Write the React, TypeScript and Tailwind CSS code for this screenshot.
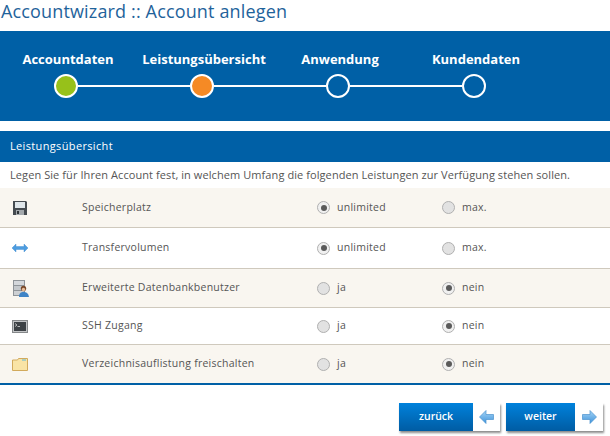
import * as React from "react";

const steps = [
  { label: "Accountdaten", fill: "bg-[#97c11a]" },
  { label: "Leistungsübersicht", fill: "bg-[#f58a25]" },
  { label: "Anwendung", fill: "" },
  { label: "Kundendaten", fill: "" },
];

function FloppyIcon() {
  return (
    <svg width="14" height="14" viewBox="0 0 14 14">
      <path d="M0 0h13l1 1v13H0z" fill="#454b50" />
      <rect x="2" y="1" width="10" height="6" fill="#dfe6ea" />
      <rect x="3" y="9" width="8" height="5" fill="#a4a9ad" />
      <rect x="4" y="10" width="2" height="3" fill="#2f3438" />
    </svg>
  );
}

function TransferIcon() {
  return (
    <svg width="16" height="8" viewBox="0 0 16 8">
      <path d="M0 4 4 0v2.500h8V0l4 4-4 4V5.500H4V8z" fill="#4d9de0" stroke="#3b87cc" strokeWidth="0.4" />
    </svg>
  );
}

function DbUserIcon() {
  return (
    <svg width="16" height="17" viewBox="0 0 16 17">
      <rect x="0" y="0" width="12" height="16" fill="#8f9499" />
      <rect x="1" y="1" width="10" height="4" fill="#d4d7db" />
      <rect x="1" y="6" width="10" height="4" fill="#c4c8cc" />
      <rect x="1" y="11" width="10" height="4" fill="#cdd0d3" />
      <circle cx="10.500" cy="8.500" r="2.700" fill="#7a4a2c" />
      <circle cx="10.500" cy="9.500" r="1.700" fill="#e8bd9a" />
      <path d="M6 17c0-4 2-5 4.500-5S15.500 13 16 17z" fill="#3f84c6" />
    </svg>
  );
}

function ConsoleIcon() {
  return (
    <svg width="16" height="13" viewBox="0 0 16 13">
      <rect x="0.500" y="0.500" width="15" height="12" fill="#c2c4c6" stroke="#85888a" />
      <rect x="2" y="2" width="12" height="9" fill="#3d4246" />
      <path d="M3 3.500 5 5 3 6.500" fill="none" stroke="#e8e8e8" strokeWidth="0.7" />
      <path d="M5.500 6.500H8" stroke="#e8e8e8" strokeWidth="0.7" />
    </svg>
  );
}

function FolderIcon() {
  return (
    <svg width="16" height="13" viewBox="0 0 16 13">
      <path d="M0.500 12.500V2h5l1-1.500h9v12z" fill="#f9e4a6" stroke="#d2aa5c" />
      <path d="M10 1.500h4v1h-4z" fill="#5bb8d8" />
    </svg>
  );
}

function Radio({ on }: { on: boolean }) {
  return (
    <span
      className={`flex size-[13px] shrink-0 items-center justify-center rounded-full border-[1.500px] border-[#b0b0b0] ${on ? "bg-[#f0f0f0]" : "bg-[#e2e2e2]"}`}
    >
      {on && <span className="size-[6px] rounded-full bg-[#5a5a5a]" />}
    </span>
  );
}

const rows = [
  { icon: <FloppyIcon />, name: "Speicherplatz", a: "unlimited", b: "max.", first: true, tint: true, h: "h-[40px]", pad: "pl-[13px]" },
  { icon: <TransferIcon />, name: "Transfervolumen", a: "unlimited", b: "max.", first: true, tint: false, h: "h-[41px]", pad: "pl-[12px]" },
  { icon: <DbUserIcon />, name: "Erweiterte Datenbankbenutzer", a: "ja", b: "nein", first: false, tint: true, h: "h-[39px]", pad: "pl-[13px]" },
  { icon: <ConsoleIcon />, name: "SSH Zugang", a: "ja", b: "nein", first: false, tint: false, h: "h-[37px]", pad: "pl-[12px]" },
  { icon: <FolderIcon />, name: "Verzeichnisauflistung freischalten", a: "ja", b: "nein", first: false, tint: true, h: "h-[38px]", pad: "pl-[12px]" },
];

function WizardButton({ label, w, outer, arrow }: { label: string; w: string; outer: string; arrow: React.ReactNode }) {
  return (
    <div className={`flex h-[28px] ${outer} shadow-[1px_2px_2px_rgba(0,0,0,0.45)]`}>
      <div className={`flex h-full ${w} items-center justify-center bg-gradient-to-b from-[#0082dc] to-[#005ca3] text-[10.500px] font-semibold text-white`}>
        {label}
      </div>
      <div className="flex flex-1 items-center justify-center bg-white">{arrow}</div>
    </div>
  );
}

function ArrowGradient({ id }: { id: string }) {
  return (
    <defs>
      <linearGradient id={id} x1="0" y1="0" x2="0" y2="1">
        <stop offset="0" stopColor="#a5d4f5" />
        <stop offset="1" stopColor="#3f94dc" />
      </linearGradient>
    </defs>
  );
}

function ArrowLeft() {
  return (
    <svg width="15" height="14" viewBox="0 0 15 14">
      <ArrowGradient id="arrow-left" />
      <path d="M0.500 7 7 0.500V4.500h7.500v5H7v4z" fill="url(#arrow-left)" stroke="#4b92cf" strokeWidth="0.7" />
    </svg>
  );
}

function ArrowRight() {
  return (
    <svg width="15" height="14" viewBox="0 0 15 14">
      <ArrowGradient id="arrow-right" />
      <path d="M14.500 7 8 0.500V4.500H0.500v5H8v4z" fill="url(#arrow-right)" stroke="#4b92cf" strokeWidth="0.7" />
    </svg>
  );
}

export default function App() {
  return (
    <div className="h-[436px] w-[610px] overflow-hidden bg-white font-['Open_Sans',sans-serif] text-[#555555]">
      <h1 className="h-[31px] pl-px text-[18px] leading-[22px] tracking-[0.15px] text-[#1f639b]">
        Accountwizard :: Account anlegen
      </h1>

      {/* Stepper */}
      <div className="h-[90px] bg-[#0060a6] pt-[19px]">
        <div className="flex">
          {steps.map((s) => (
            <div key={s.label} className="w-[136px] text-center text-[13px] leading-[18px] font-bold text-white">
              {s.label}
            </div>
          ))}
        </div>
        <div className="mt-[6px] ml-[54px] flex items-center">
          {steps.map((s, i) => (
            <React.Fragment key={s.label}>
              <span className={`size-[24px] rounded-full border-2 border-white ${s.fill}`} />
              {i < steps.length - 1 && <span className="h-[2px] w-[112px] bg-white" />}
            </React.Fragment>
          ))}
        </div>
      </div>

      <div className="mt-[10px] flex h-[31px] items-center bg-[#0060a6] pl-[10px] text-[11px] font-medium tracking-[0.35px] text-white">
        Leistungsübersicht
      </div>
      <p className="flex h-[26px] items-center pl-[10px] text-[11px] tracking-[0.08px]">
        Legen Sie für Ihren Account fest, in welchem Umfang die folgenden Leistungen zur Verfügung stehen sollen.
      </p>

      <div className="border-b-2 border-[#0060a6]">
        {rows.map((r) => (
          <div
            key={r.name}
            className={`flex ${r.h} items-center border-b border-[#cfc9bd] last:border-b-0 text-[10.500px] tracking-[0.25px] ${r.tint ? "bg-[#f9f6f0]" : "bg-white"}`}
          >
            <div className={`flex w-[82px] justify-start ${r.pad}`}>{r.icon}</div>
            <div className="w-[235px]">{r.name}</div>
            <div className="flex w-[125px] items-center gap-[7px]">
              <Radio on={r.first} />
              {r.a}
            </div>
            <div className="flex items-center gap-[7px]">
              <Radio on={!r.first} />
              {r.b}
            </div>
          </div>
        ))}
      </div>

      <div className="mt-[18px] flex justify-end gap-[6px] pr-[7px]">
        <WizardButton label="zurück" w="w-[74px]" outer="w-[101px]" arrow={<ArrowLeft />} />
        <WizardButton label="weiter" w="w-[69px]" outer="w-[97px]" arrow={<ArrowRight />} />
      </div>
    </div>
  );
}
